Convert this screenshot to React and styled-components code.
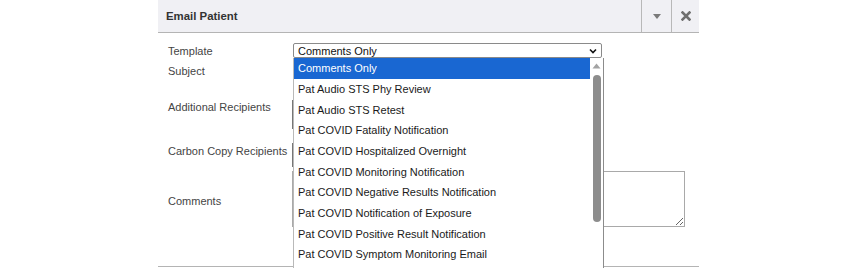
import React from "react";
import styled, { createGlobalStyle } from "styled-components";

const GlobalStyle = createGlobalStyle`
  html, body { margin: 0; padding: 0; background: #fff; }
  body { font-family: "Liberation Sans", Arial, sans-serif; overflow: hidden; }
`;

const Page = styled.div`
  padding-left: 158px;
  height: 268px;
  overflow: hidden;
`;

const Panel = styled.div`
  width: 541px;
  display: flex;
  flex-direction: column;
`;

const Header = styled.div`
  height: 32px;
  background: #f0f0f4;
  border-bottom: 1px solid #b4b4b4;
  display: flex;
  align-items: stretch;
`;

const Title = styled.div`
  flex: 1;
  display: flex;
  align-items: center;
  padding-left: 8px;
  font-weight: bold;
  font-size: 11.4px;
  color: #333;
`;

const HeaderButton = styled.div`
  width: ${(p) => p.$w}px;
  border-left: 1px solid #b8b8b8;
  display: flex;
  align-items: center;
  justify-content: center;
`;

const Body = styled.div`
  position: relative;
  height: 234px;
  border-bottom: 1px solid #b4b4b4;
  padding: 10px 0 0 10px;
  box-sizing: border-box;
`;

const Row = styled.div`
  display: flex;
  align-items: ${(p) => (p.$center ? "center" : "flex-start")};
  margin-top: ${(p) => p.$mt || 0}px;
`;

const Label = styled.div`
  width: 124px;
  flex: none;
  font-size: 11px;
  line-height: 14px;
  color: #444;
  padding-top: ${(p) => p.$pt || 0}px;
`;

const Select = styled.div`
  margin-left: 1px;
  width: 309px;
  height: 15px;
  box-sizing: border-box;
  border: 1px solid #8a8a8a;
  border-radius: 2px;
  display: flex;
  align-items: center;
  justify-content: space-between;
  padding: 0 4px 0 4px;
  font-size: 11px;
  color: #111;
`;

const Field = styled.div`
  width: 308px;
  height: ${(p) => p.$h}px;
  margin-left: ${(p) => p.$ml || 0}px;
  box-sizing: border-box;
  border: 1px solid #767676;
  background: #fff;
`;

const TextArea = styled.textarea`
  width: 393px;
  height: 56px;
  box-sizing: border-box;
  border: 1px solid #a9a9a9;
  resize: both;
  margin: 0;
  padding: 2px;
  font-family: inherit;
  outline: none;
`;

const ListBox = styled.div`
  position: absolute;
  left: 135px;
  top: 25px;
  width: 311px;
  height: 210px;
  box-sizing: border-box;
  background: #fff;
  border-left: 1px solid #b9b9b9;
  border-right: 1px solid #8c8c8c;
  display: flex;
  z-index: 5;
  overflow: hidden;
`;

const Options = styled.div`
  flex: 1;
  display: flex;
  flex-direction: column;
`;

const Option = styled.div`
  height: 20.67px;
  flex: none;
  display: flex;
  align-items: center;
  padding-left: 4px;
  font-size: 11px;
  white-space: nowrap;
  overflow: hidden;
  color: ${(p) => (p.$selected ? "#fff" : "#1a1a1a")};
  background: ${(p) => (p.$selected ? "#1967d2" : "transparent")};
`;

const ScrollBar = styled.div`
  width: 13px;
  flex: none;
  display: flex;
  flex-direction: column;
  align-items: center;
  padding-top: 5px;
`;

const Thumb = styled.div`
  margin-top: 6px;
  width: 8px;
  height: 147px;
  border-radius: 4px;
  background: #8d8d8d;
`;

const options = [
  "Comments Only",
  "Pat Audio STS Phy Review",
  "Pat Audio STS Retest",
  "Pat COVID Fatality Notification",
  "Pat COVID Hospitalized Overnight",
  "Pat COVID Monitoring Notification",
  "Pat COVID Negative Results Notification",
  "Pat COVID Notification of Exposure",
  "Pat COVID Positive Result Notification",
  "Pat COVID Symptom Monitoring Email",
];

export default function App() {
  return (
    <>
      <GlobalStyle />
      <Page>
        <Panel>
          <Header>
            <Title>Email Patient</Title>
            <HeaderButton $w={29}>
              <svg width="8" height="5" viewBox="0 0 8 5">
                <path d="M0 0 L8 0 L4 5 Z" fill="#7a7a7a" />
              </svg>
            </HeaderButton>
            <HeaderButton $w={27}>
              <svg width="10" height="10" viewBox="0 0 10 10">
                <path
                  d="M1.5 1.5 L8.5 8.5 M8.5 1.5 L1.5 8.5"
                  stroke="#6f6f6f"
                  strokeWidth="2.6"
                  strokeLinecap="square"
                />
              </svg>
            </HeaderButton>
          </Header>
          <Body>
            <Row $center>
              <Label>Template</Label>
              <Select>
                <span>Comments Only</span>
                <svg width="8" height="6" viewBox="0 0 8 6">
                  <path d="M1 1.5 L4 4.5 L7 1.5" stroke="#111" strokeWidth="1.6" fill="none" />
                </svg>
              </Select>
            </Row>
            <Row $center $mt={5}>
              <Label>Subject</Label>
              <Field $h={16} $ml={1} />
            </Row>
            <Row $mt={21}>
              <Label>Additional Recipients</Label>
              <Field $h={29} />
            </Row>
            <Row $mt={14}>
              <Label $pt={1}>Carbon Copy Recipients</Label>
              <Field $h={24} />
            </Row>
            <Row $mt={4}>
              <Label $pt={23}>Comments</Label>
              <TextArea />
            </Row>
            <ListBox>
              <Options>
                {options.map((o, i) => (
                  <Option key={o} $selected={i === 0}>
                    {o}
                  </Option>
                ))}
              </Options>
              <ScrollBar>
                <svg width="9" height="6" viewBox="0 0 9 6">
                  <path d="M0.5 5.5 L4.5 0.5 L8.5 5.5 Z" fill="#a3a3a3" />
                </svg>
                <Thumb />
              </ScrollBar>
            </ListBox>
          </Body>
        </Panel>
      </Page>
    </>
  );
}
